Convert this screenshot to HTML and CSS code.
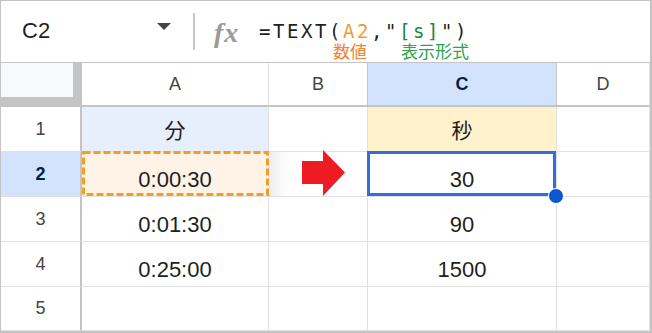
FILE: index.html
```html
<!DOCTYPE html>
<html lang="ja">
<head>
<meta charset="utf-8">
<title>TEXT関数</title>
<link rel="stylesheet" href="styles.css">
</head>
<body>
<div class="sheet">
  <div class="formula-bar">
    <div class="name-box">
      <span class="cell-ref">C2</span>
      <span class="caret"></span>
    </div>
    <div class="divider"></div>
    <div class="fx">fx</div>
    <div class="formula">
      <div class="formula-text">=TEXT(<span class="ref">A2</span>,"<span class="str">[s]</span>")</div>
      <div class="notes"><span class="note-num">数値</span><span class="note-fmt">表示形式</span></div>
    </div>
  </div>
  <div class="grid">
    <div class="corner"></div>
    <div class="col-head">A</div>
    <div class="col-head before-active">B</div>
    <div class="col-head active">C</div>
    <div class="col-head">D</div>

    <div class="row-head">1</div>
    <div class="cell title title-min">分</div>
    <div class="cell"></div>
    <div class="cell title title-sec">秒</div>
    <div class="cell"></div>

    <div class="row-head active">2</div>
    <div class="cell copied">0:00:30
      <svg class="marching" viewBox="0 0 187 45" width="187" height="45"><rect x="1.5" y="1.5" width="184" height="42" fill="none" stroke="#f49d25" stroke-width="3" stroke-dasharray="7 3"/></svg>
    </div>
    <div class="cell shadowed">
      <svg class="arrow" viewBox="0 0 48 50" width="48" height="50"><polygon points="2,13 23,13 23,2 45,24.5 23,48 23,36 2,36" fill="#ed1c24"/></svg>
    </div>
    <div class="cell selected">30<span class="handle"></span></div>
    <div class="cell"></div>

    <div class="row-head">3</div>
    <div class="cell">0:01:30</div>
    <div class="cell"></div>
    <div class="cell">90</div>
    <div class="cell"></div>

    <div class="row-head">4</div>
    <div class="cell">0:25:00</div>
    <div class="cell"></div>
    <div class="cell">1500</div>
    <div class="cell"></div>

    <div class="row-head">5</div>
    <div class="cell"></div>
    <div class="cell"></div>
    <div class="cell"></div>
    <div class="cell"></div>
  </div>
</div>
</body>
</html>
```
FILE: styles.css
```css
* { box-sizing: border-box; }
html, body { margin: 0; padding: 0; background: #fff; }
body { font-family: "Liberation Sans", Arial, sans-serif; color: #1f1f1f; }

.sheet {
  width: 652px;
  height: 333px;
  border: 1px solid #c4c4c4;
  border-right-width: 2px;
  border-bottom-width: 2px;
  display: flex;
  flex-direction: column;
  overflow: hidden;
}

/* formula bar */
.formula-bar {
  height: 62px;
  flex: none;
  border-bottom: 1px solid #c4c4c4;
  display: flex;
  align-items: flex-start;
}
.name-box {
  width: 192px;
  display: flex;
  align-items: flex-start;
  padding-left: 21px;
}
.cell-ref {
  font-size: 22px;
  line-height: 26px;
  margin-top: 17px;
  color: #1f1f1f;
}
.caret {
  margin-left: auto;
  margin-right: 22px;
  margin-top: 22px;
  width: 0;
  height: 0;
  border-left: 7px solid transparent;
  border-right: 7px solid transparent;
  border-top: 7px solid #444;
}
.divider {
  width: 2px;
  height: 37px;
  margin-top: 12px;
  background: #c7c7c7;
}
.fx {
  width: 27px;
  margin-left: 19px;
  margin-top: 18px;
  font-family: "Liberation Serif", "Times New Roman", serif;
  font-style: italic;
  font-weight: bold;
  font-size: 28px;
  line-height: 28px;
  color: #9a9a9a;
  letter-spacing: 1px;
}
.formula {
  margin-left: 17px;
  padding-top: 20px;
}
.formula-text {
  font-family: "DejaVu Sans Mono", "Liberation Mono", monospace;
  font-size: 19px;
  line-height: 20px;
  letter-spacing: 2.56px;
  color: #1f1f1f;
  white-space: nowrap;
  padding-left: 1px;
}
.ref { color: #f29a35; }
.str { color: #23873f; }
.notes {
  margin-top: 1px;
  font-family: "Noto Sans CJK JP", sans-serif;
  font-size: 17px;
  line-height: 18px;
  white-space: nowrap;
}
.note-num { margin-left: 75px; color: #f5822a; }
.note-fmt { margin-left: 34px; color: #2ea34c; }

/* grid */
.grid {
  flex: 1;
  display: grid;
  grid-template-columns: 81px 187px 99px 189px 1fr;
  grid-template-rows: 44px repeat(4, 45px) 1fr;
}
.corner {
  background: #f8f9fa;
  border-right: 9px solid #c4c4c4;
  border-bottom: 10px solid #c4c4c4;
}
.col-head {
  display: flex;
  align-items: center;
  justify-content: center;
  font-size: 18px;
  color: #444;
  border-right: 1px solid #e1e1e1;
  border-bottom: 2px solid #c4c4c4;
}
.col-head.before-active { border-right-color: #c4c4c4; }
.col-head.active {
  background: #d3e3fd;
  color: #041e49;
  font-weight: bold;
  border-right-color: #c4c4c4;
}
.row-head {
  display: flex;
  align-items: center;
  justify-content: center;
  font-size: 18px;
  color: #444;
  border-right: 2px solid #c4c4c4;
  border-bottom: 1px solid #e1e1e1;
}
.row-head.active {
  background: #d3e3fd;
  color: #041e49;
  font-weight: bold;
}
.cell {
  position: relative;
  display: flex;
  align-items: flex-end;
  justify-content: center;
  font-size: 22px;
  line-height: 25px;
  padding-bottom: 4px;
  color: #1f1f1f;
  border-right: 1px solid #e1e1e1;
  border-bottom: 1px solid #e1e1e1;
}
.cell.title {
  align-items: center;
  padding-bottom: 0;
  font-family: "Noto Sans CJK JP", sans-serif;
  font-size: 21px;
  line-height: 21px;
}
.title-min { background: #e6effb; }
.title-sec { background: #fff2cc; }
.copied { background: #fdf3e7; }
.marching {
  position: absolute;
  left: 0;
  top: -1px;
  display: block;
}
.shadowed {
  background: linear-gradient(to right, #ececec, #f8f8f8 10px, #fff 22px);
}
.arrow {
  position: absolute;
  left: 31px;
  top: -4px;
  display: block;
}
.selected::after {
  content: "";
  position: absolute;
  left: -1px;
  top: -1px;
  right: 0;
  bottom: 0;
  border: 3px solid #2f6fe0;
}
.handle {
  position: absolute;
  right: -8px;
  bottom: -8px;
  width: 16px;
  height: 16px;
  border-radius: 50%;
  background: #0b57d0;
  border: 1px solid #fff;
  z-index: 2;
}
```
